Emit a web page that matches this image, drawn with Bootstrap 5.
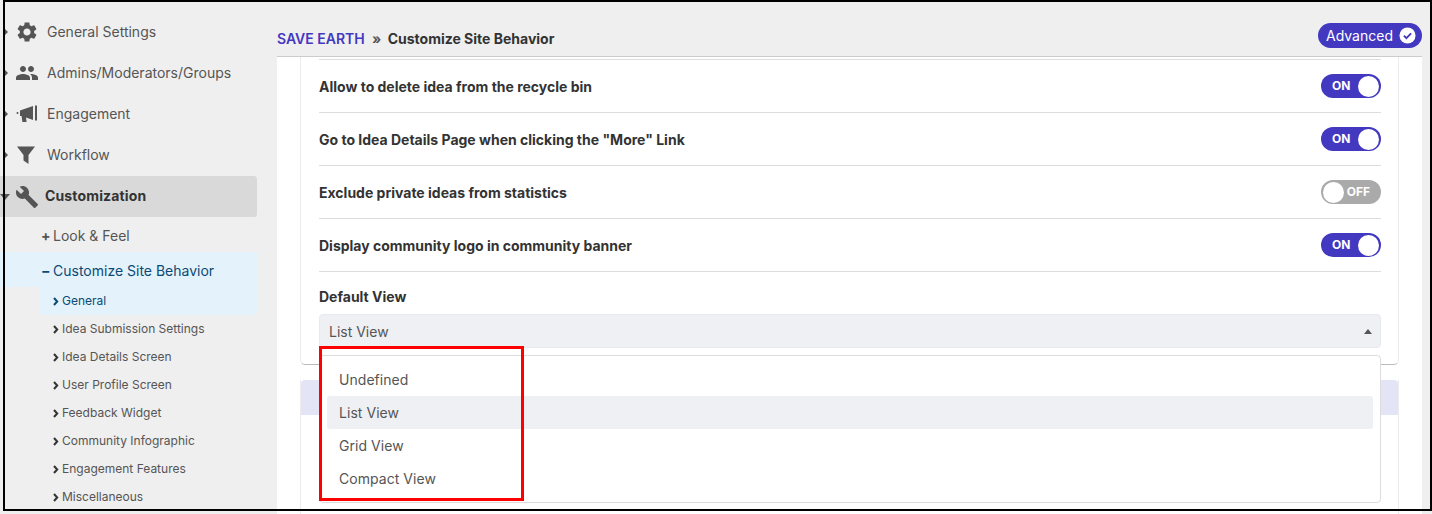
<!DOCTYPE html>
<html lang="en">
<head>
<meta charset="utf-8">
<title>Customize Site Behavior</title>
<link href="https://cdn.jsdelivr.net/npm/bootstrap@5.3.0/dist/css/bootstrap.min.css" rel="stylesheet">
<style>
html,body{height:514px;overflow:hidden;}
body{font-family:Inter,"Liberation Sans",sans-serif;font-size:14px;color:#555;background:#efefef;position:relative;}
.shell{height:514px;}
.side{width:277px;flex:none;}
.side-list{padding-top:12px;}
.top-item{height:41px;color:#555;padding-left:47px;padding-bottom:2px;position:relative;}
.top-item svg{position:absolute;left:16px;top:50%;transform:translateY(-50%);margin-top:-1px;fill:#555;}
.top-item svg.gear{left:17px;}
.tri{position:absolute;left:3px;top:50%;margin-top:-6px;width:0;height:0;border-left:5px solid #555;border-top:5px solid transparent;border-bottom:5px solid transparent;}
.top-item.is-open{background:#d9d9d9;width:257px;border-radius:0 3px 3px 0;font-weight:700;color:#333;padding-left:45px;letter-spacing:.15px;}
.is-open .tri{left:0;margin-top:-3px;border-top:6px solid #555;border-left:5px solid transparent;border-right:5px solid transparent;border-bottom:0;}
.top-item.is-open svg{margin-top:0;}
.sec{width:257px;height:35px;padding-left:41px;color:#555;}
.sec.look{height:34px;margin-top:1px;padding-top:1px;}
.sec.on{background:#e3f2fb;color:#0b4a75;border-radius:0 3px 0 0;padding-top:2px;}
.sub{margin-left:39px;width:218px;height:28px;padding-left:14px;font-size:12px;color:#555;}
.sub.on{background:#e3f2fb;color:#0b4a75;border-radius:0 0 3px 3px;}
.chev{width:6px;height:9px;margin-right:3px;fill:none;stroke:currentColor;stroke-width:2;flex:none;color:#333;}
.sub.on .chev{color:#0b4a75;}
.mark-sign{display:inline-block;width:8px;margin-right:4px;font-weight:700;line-height:1;text-align:center;}
.main-col{min-width:0;margin-right:10px;}
.head{height:57px;padding:23px 0 0 0;border-bottom:1px solid #ccc;}
.crumb{font-weight:700;color:#333;padding-top:5px;}
.crumb b{color:#4338c0;font-weight:600;}
.crumb i{font-style:normal;color:#555;margin:0 3px 0 4px;}
.adv{width:104px;height:25px;border-radius:13px;background:#4338c0;color:#fff;padding:0 6px 0 8px;}
.pane{background:#fff;height:457px;overflow:hidden;padding:0 23px;}
.box1{border:1px solid #ececec;border-top:0;border-bottom-color:#bbb;border-radius:0 0 5px 5px;padding:2px 17px 0 18px;height:308px;}
.opt-row{height:53px;border-top:1px solid #ddd;font-weight:700;color:#333;}
.opt-row.last{border-bottom:1px solid #ddd;height:54px;}
.tog{width:60px;height:24px;border-radius:12px;background:#4338c0;color:#fff;font-size:12px;font-weight:700;padding:0 2px 0 11px;}
.tog span.knob{width:21px;height:21px;border-radius:50%;background:#fff;}
.tog.off{background:#aaa;padding:0 11px 0 2px;}
.lbl{font-weight:700;color:#333;margin:16px 0 9px;line-height:17px;}
.pick{position:relative;height:34px;background:#eff0f4;border:1px solid #e8e9ee;border-radius:4px;padding:0 9px;color:#555;}
.caret-up{width:0;height:0;border-left:4px solid transparent;border-right:4px solid transparent;border-bottom:5px solid #555;margin-right:-1px;}
.menu-box{position:absolute;z-index:5;left:-1px;right:-1px;top:40px;height:148px;background:#fff;border:1px solid #ddd;border-radius:4px;padding:7px;}
.menu-row{height:33px;padding-left:12px;color:#555;letter-spacing:.05px;border-radius:3px;}
.menu-row.sel{background:#eff0f4;}
.red-box{position:absolute;z-index:6;left:-1px;top:31px;width:205px;height:155px;border:3px solid #f00;}
.box2{margin-top:15px;border:1px solid #ececec;border-top:0;height:200px;}
.box2-head{height:35px;background:#e3e4f5;border-radius:4px 4px 0 0;}
.box2-text{padding:97px 0 0 18px;font-weight:600;color:#333;line-height:17px;letter-spacing:.2px;white-space:nowrap;}
.frame{position:absolute;z-index:9;left:3px;top:0;width:1429px;height:511px;border:2px solid #000;pointer-events:none;}
</style>
</head>
<body>
<div class="shell d-flex">
  <aside class="side">
    <div class="side-list">
      <div class="top-item d-flex align-items-center"><span class="tri"></span>
        <svg class="gear" width="20" height="20" viewBox="2 2 20 20" aria-hidden="true"><path d="M19.14 12.94c.04-.3.06-.61.06-.94 0-.32-.02-.64-.07-.94l2.03-1.58c.18-.14.23-.41.12-.61l-1.92-3.32c-.12-.22-.37-.29-.59-.22l-2.39.96c-.5-.38-1.03-.7-1.62-.94l-.36-2.54c-.04-.24-.24-.41-.48-.41h-3.84c-.24 0-.43.17-.47.41l-.36 2.54c-.59.24-1.13.57-1.62.94l-2.39-.96c-.22-.08-.47 0-.59.22L2.74 8.87c-.12.21-.08.47.12.61l2.03 1.58c-.05.3-.09.63-.09.94s.02.64.07.94l-2.03 1.58c-.18.14-.23.41-.12.61l1.92 3.32c.12.22.37.29.59.22l2.39-.96c.5.38 1.03.7 1.62.94l.36 2.54c.05.24.24.41.48.41h3.84c.24 0 .44-.17.47-.41l.36-2.54c.59-.24 1.13-.56 1.62-.94l2.39.96c.22.08.47 0 .59-.22l1.92-3.32c.12-.22.07-.47-.12-.61l-2.01-1.58zM12 15.6c-1.98 0-3.6-1.62-3.6-3.6s1.62-3.6 3.6-3.6 3.6 1.62 3.6 3.6-1.62 3.6-3.6 3.6z"/></svg>General Settings</div>
      <div class="top-item d-flex align-items-center"><span class="tri"></span>
        <svg width="22" height="22" viewBox="1 1 22 22" aria-hidden="true"><path d="M16 11c1.66 0 2.99-1.34 2.99-3S17.66 5 16 5c-1.66 0-3 1.34-3 3s1.34 3 3 3zm-8 0c1.66 0 2.99-1.34 2.99-3S9.66 5 8 5C6.34 5 5 6.34 5 8s1.34 3 3 3zm0 2c-2.33 0-7 1.17-7 3.5V19h14v-2.5c0-2.33-4.67-3.5-7-3.5zm8 0c-.29 0-.62.02-.97.05 1.16.84 1.97 1.97 1.97 3.45V19h6v-2.5c0-2.33-4.67-3.5-7-3.5z"/></svg>Admins/Moderators/Groups</div>
      <div class="top-item d-flex align-items-center"><span class="tri"></span>
        <svg width="22" height="18" viewBox="0 0 22 18" aria-hidden="true"><circle cx="1.5" cy="8" r="1"/><path d="M4 5.5 17 1v14L10 12.6 10.6 17H6.4L5.6 11H4z"/><rect x="19" y="0.5" width="2" height="15"/></svg>Engagement</div>
      <div class="top-item d-flex align-items-center"><span class="tri"></span>
        <svg width="20" height="20" viewBox="0 0 20 20" aria-hidden="true"><path d="M1 1.5h18L12.5 10v9L7.5 15.5V10z"/></svg>Workflow</div>
      <div class="top-item is-open d-flex align-items-center"><span class="tri"></span>
        <svg width="22" height="22" viewBox="1 1 22 22" aria-hidden="true"><path d="M22.7 19l-9.1-9.1c.9-2.3.4-5-1.5-6.9-2-2-5-2.4-7.4-1.3L9 6 6 9 1.6 4.7C.4 7.1.9 10.1 2.9 12.1c1.9 1.9 4.6 2.4 6.9 1.5l9.1 9.1c.4.4 1 .4 1.4 0l2.3-2.3c.5-.4.5-1.1.1-1.4z"/></svg>Customization</div>
      <div class="sec look d-flex align-items-center"><span class="mark-sign">+</span>Look &amp; Feel</div>
      <div class="sec on d-flex align-items-center"><span class="mark-sign">−</span>Customize Site Behavior</div>
      <div class="sub on d-flex align-items-center"><svg class="chev" viewBox="0 0 6 9" aria-hidden="true"><path d="M1 1l3.2 3.5L1 8"/></svg>General</div>
      <div class="sub d-flex align-items-center"><svg class="chev" viewBox="0 0 6 9" aria-hidden="true"><path d="M1 1l3.2 3.5L1 8"/></svg>Idea Submission Settings</div>
      <div class="sub d-flex align-items-center"><svg class="chev" viewBox="0 0 6 9" aria-hidden="true"><path d="M1 1l3.2 3.5L1 8"/></svg>Idea Details Screen</div>
      <div class="sub d-flex align-items-center"><svg class="chev" viewBox="0 0 6 9" aria-hidden="true"><path d="M1 1l3.2 3.5L1 8"/></svg>User Profile Screen</div>
      <div class="sub d-flex align-items-center"><svg class="chev" viewBox="0 0 6 9" aria-hidden="true"><path d="M1 1l3.2 3.5L1 8"/></svg>Feedback Widget</div>
      <div class="sub d-flex align-items-center"><svg class="chev" viewBox="0 0 6 9" aria-hidden="true"><path d="M1 1l3.2 3.5L1 8"/></svg>Community Infographic</div>
      <div class="sub d-flex align-items-center"><svg class="chev" viewBox="0 0 6 9" aria-hidden="true"><path d="M1 1l3.2 3.5L1 8"/></svg>Engagement Features</div>
      <div class="sub d-flex align-items-center"><svg class="chev" viewBox="0 0 6 9" aria-hidden="true"><path d="M1 1l3.2 3.5L1 8"/></svg>Miscellaneous</div>
    </div>
  </aside>
  <div class="main-col flex-grow-1">
    <div class="head d-flex justify-content-between align-items-start">
      <div class="crumb"><b>SAVE EARTH</b> <i>»</i> Customize Site Behavior</div>
      <div class="adv d-flex align-items-center justify-content-between">Advanced
        <svg width="17" height="17" viewBox="0 0 18 18" aria-hidden="true"><circle cx="9" cy="9" r="8.5" fill="#fff"/><path d="M5.2 9.2l2.6 2.6 5-5" fill="none" stroke="#4338c0" stroke-width="2"/></svg>
      </div>
    </div>
    <div class="pane">
      <div class="box1">
        <div class="opt-row d-flex align-items-center justify-content-between">Allow to delete idea from the recycle bin
          <div class="tog d-flex align-items-center justify-content-between">ON<span class="knob"></span></div></div>
        <div class="opt-row d-flex align-items-center justify-content-between">Go to Idea Details Page when clicking the "More" Link
          <div class="tog d-flex align-items-center justify-content-between">ON<span class="knob"></span></div></div>
        <div class="opt-row d-flex align-items-center justify-content-between">Exclude private ideas from statistics
          <div class="tog off d-flex align-items-center justify-content-between"><span class="knob"></span>OFF</div></div>
        <div class="opt-row last d-flex align-items-center justify-content-between">Display community logo in community banner
          <div class="tog d-flex align-items-center justify-content-between">ON<span class="knob"></span></div></div>
        <div class="lbl">Default View</div>
        <div class="pick d-flex align-items-center justify-content-between">List View<span class="caret-up"></span>
          <div class="red-box"></div>
          <div class="menu-box">
            <div class="menu-row d-flex align-items-center">Undefined</div>
            <div class="menu-row sel d-flex align-items-center">List View</div>
            <div class="menu-row d-flex align-items-center">Grid View</div>
            <div class="menu-row d-flex align-items-center">Compact View</div>
          </div>
        </div>
      </div>
      <div class="box2">
        <div class="box2-head"></div>
        <div class="box2-text">Use Default Idea Link for the Community Home Page and Banner</div>
      </div>
    </div>
  </div>
</div>
<div class="frame"></div>
<script src="https://cdn.jsdelivr.net/npm/bootstrap@5.3.0/dist/js/bootstrap.bundle.min.js"></script>
</body>
</html>
